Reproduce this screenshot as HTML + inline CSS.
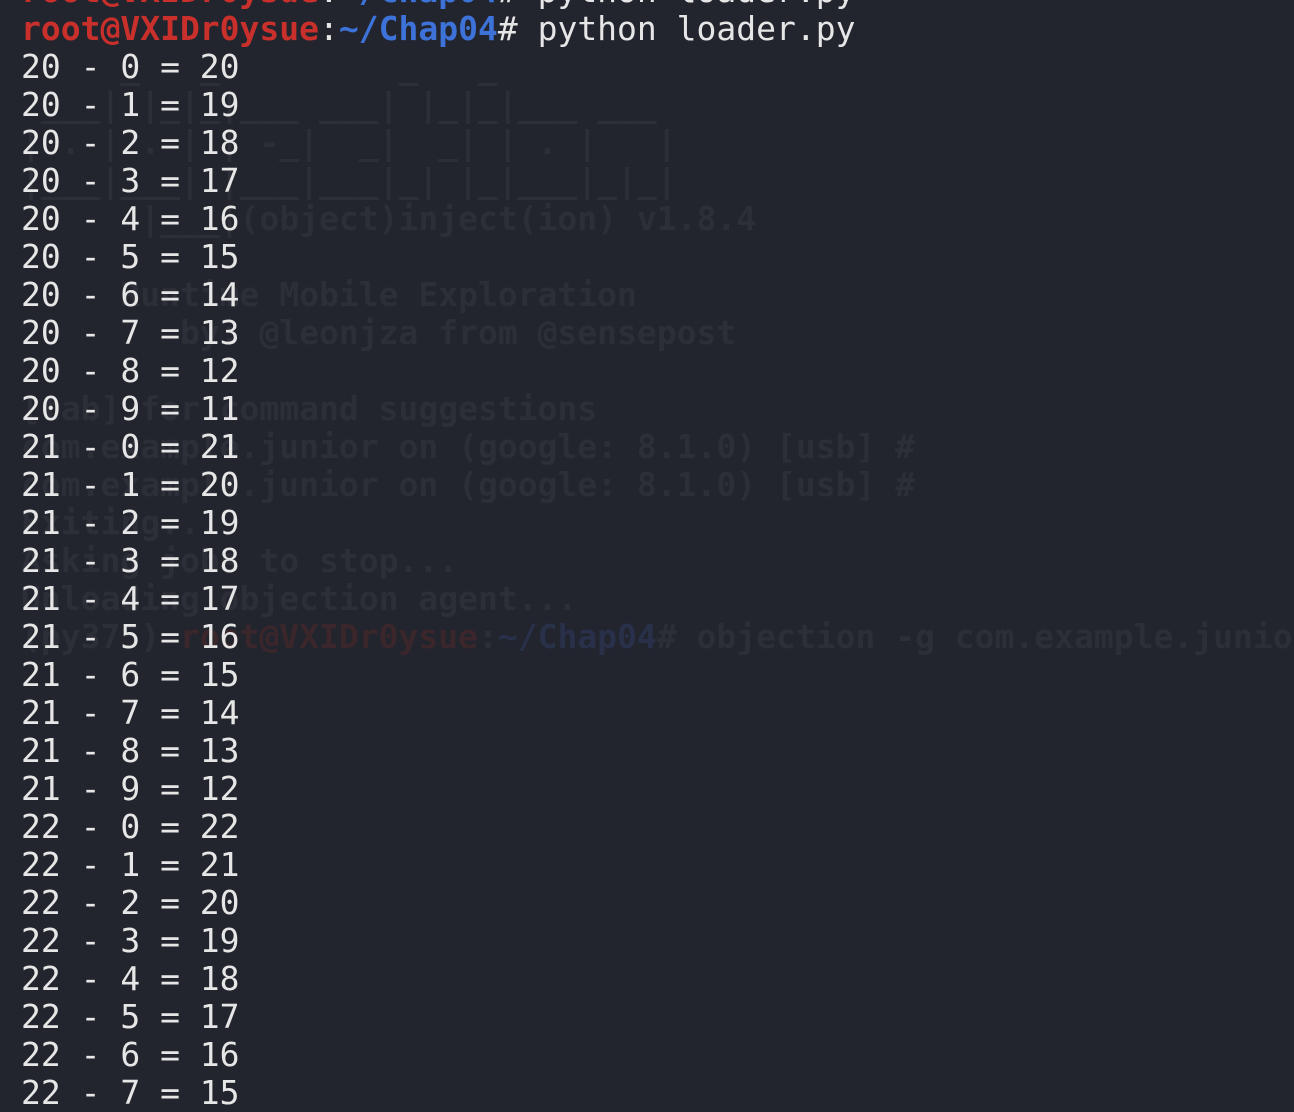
<!DOCTYPE html>
<html><head><meta charset="utf-8"><style>
html,body{margin:0;padding:0;background:#22252d;width:1294px;height:1108px;overflow:hidden}
.t{position:absolute;left:21px;top:-28px;font-family:"DejaVu Sans Mono","Liberation Mono",monospace;font-size:33px;line-height:38px;white-space:pre}
.fg{color:#e6e6e6}
.gh{color:#2c2f37;font-weight:bold}
.r{color:#c9302c;font-weight:bold}
.b{color:#3d72d8;font-weight:bold}
.gr{color:#3a262b}
.gb{color:#28304a}
</style></head><body>
<div class="t gh">

     _   _         _   _
 ___| |_|_|___ ___| |_|_|___ ___
| . | . | | -_|  _|  _| | . |   |
|___|___| |___|___|_| |_|___|_|_|
      |___|(object)inject(ion) v1.8.4

     Runtime Mobile Exploration
        by: @leonjza from @sensepost

[tab] for command suggestions
com.example.junior on (google: 8.1.0) [usb] #
com.example.junior on (google: 8.1.0) [usb] #
Exiting...
Asking jobs to stop...
Unloading objection agent...
(py375) <span class="gr">root@VXIDr0ysue</span>:<span class="gb">~/Chap04</span># objection -g com.example.junio</div>
<div class="t fg"><span class="r">root@VXIDr0ysue</span>:<span class="b">~/Chap04</span># python loader.py
<span class="r">root@VXIDr0ysue</span>:<span class="b">~/Chap04</span># python loader.py
20 - 0 = 20
20 - 1 = 19
20 - 2 = 18
20 - 3 = 17
20 - 4 = 16
20 - 5 = 15
20 - 6 = 14
20 - 7 = 13
20 - 8 = 12
20 - 9 = 11
21 - 0 = 21
21 - 1 = 20
21 - 2 = 19
21 - 3 = 18
21 - 4 = 17
21 - 5 = 16
21 - 6 = 15
21 - 7 = 14
21 - 8 = 13
21 - 9 = 12
22 - 0 = 22
22 - 1 = 21
22 - 2 = 20
22 - 3 = 19
22 - 4 = 18
22 - 5 = 17
22 - 6 = 16
22 - 7 = 15</div>
</body></html>
